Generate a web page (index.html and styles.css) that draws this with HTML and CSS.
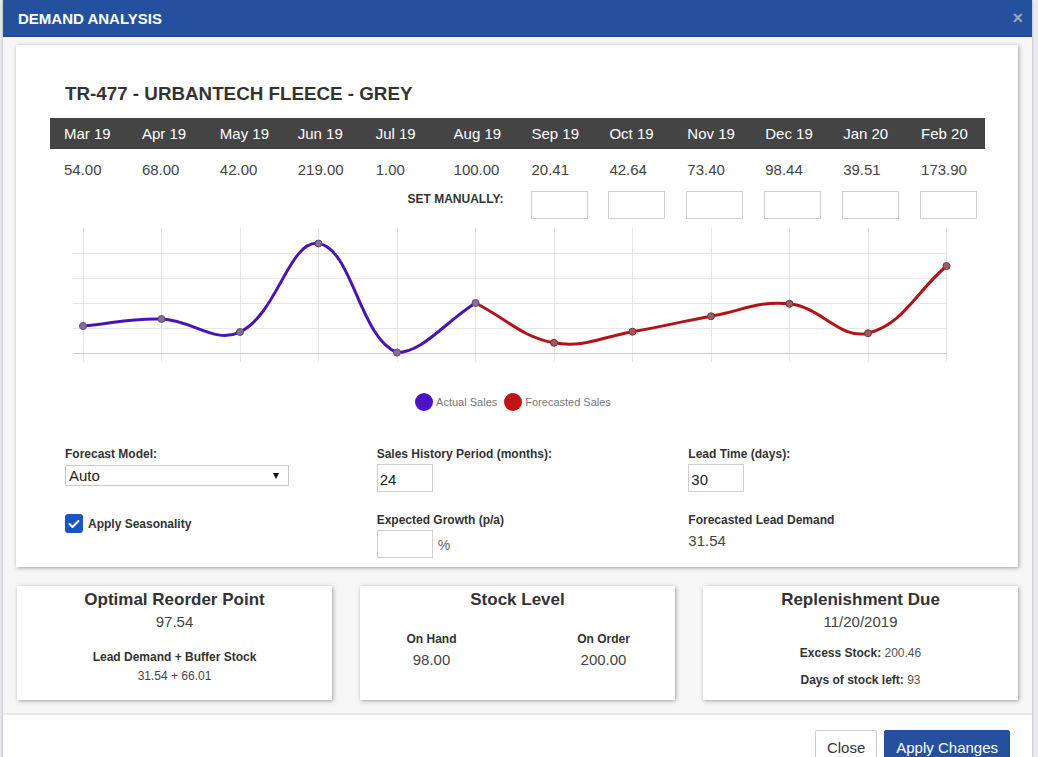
FILE: index.html
```html
<!DOCTYPE html>
<html lang="en">
<head>
<meta charset="utf-8">
<title>Demand Analysis</title>
<link rel="stylesheet" href="styles.css">
</head>
<body>
<div class="modal">
  <div class="modal-header">
    <h1 class="modal-title">DEMAND ANALYSIS</h1>
    <span class="close">×</span>
  </div>
  <div class="modal-body">
    <div class="panel main-panel">
      <h2 class="product">TR-477 - URBANTECH FLEECE - GREY</h2>
      <div class="months months-head">
        <div>Mar 19</div><div>Apr 19</div><div>May 19</div><div>Jun 19</div><div>Jul 19</div><div>Aug 19</div>
        <div>Sep 19</div><div>Oct 19</div><div>Nov 19</div><div>Dec 19</div><div>Jan 20</div><div>Feb 20</div>
      </div>
      <div class="months months-vals">
        <div>54.00</div><div>68.00</div><div>42.00</div><div>219.00</div><div>1.00</div><div>100.00</div>
        <div>20.41</div><div>42.64</div><div>73.40</div><div>98.44</div><div>39.51</div><div>173.90</div>
      </div>
      <div class="months months-manual">
        <div class="set-label">SET MANUALLY:</div>
        <div><input class="box" type="text"></div>
        <div><input class="box" type="text"></div>
        <div><input class="box" type="text"></div>
        <div><input class="box" type="text"></div>
        <div><input class="box" type="text"></div>
        <div><input class="box" type="text"></div>
      </div>
      <svg class="chart" width="935" height="150" viewBox="50 222 935 150" xmlns="http://www.w3.org/2000/svg">
        <g stroke="#e6e6e6" stroke-width="1" fill="none">
          <line x1="83.5" y1="228" x2="83.5" y2="362"/>
          <line x1="161.5" y1="228" x2="161.5" y2="362"/>
          <line x1="240.5" y1="228" x2="240.5" y2="362"/>
          <line x1="318.5" y1="228" x2="318.5" y2="362"/>
          <line x1="397.5" y1="228" x2="397.5" y2="362"/>
          <line x1="475.5" y1="228" x2="475.5" y2="362"/>
          <line x1="554.5" y1="228" x2="554.5" y2="362"/>
          <line x1="632.5" y1="228" x2="632.5" y2="362"/>
          <line x1="711.5" y1="228" x2="711.5" y2="362"/>
          <line x1="789.5" y1="228" x2="789.5" y2="362"/>
          <line x1="868.5" y1="228" x2="868.5" y2="362"/>
          <line x1="946.5" y1="228" x2="946.5" y2="362"/>
          <line x1="73" y1="253.5" x2="947" y2="253.5"/>
          <line x1="73" y1="278.5" x2="947" y2="278.5"/>
          <line x1="73" y1="303.5" x2="947" y2="303.5"/>
          <line x1="73" y1="328.5" x2="947" y2="328.5"/>
        </g>
        <line x1="73" y1="353.5" x2="947" y2="353.5" stroke="#c8c8c8" stroke-width="1"/>
        <path d="M475.5,303 C506.9,318.9 521,336.8 554,342.8 C583.8,348.2 601.2,337 632.5,331.7 C664,326.4 679.5,321.9 711,316.3 C742.3,310.7 758.9,300.5 789.5,303.8 C821.7,307.3 839.9,340 868,333.2 C902.7,324.9 915.1,292.9 946.5,266" fill="none" stroke="#b01418" stroke-width="3"/>
        <path d="M83,326 C114.4,323.2 130.3,317.8 161.5,319 C193.1,320.2 214.7,344.2 240,332 C277.5,314 289.1,239.7 318.5,243.5 C351.9,247.9 359.9,338.4 397,352.5 C422.7,352.5 444.1,322.8 475.5,303" fill="none" stroke="#4a14b4" stroke-width="3"/>
        <g fill="#84708f" stroke="#5f4a7a" stroke-width="1">
          <circle cx="83" cy="326" r="3.5"/>
          <circle cx="161.5" cy="319" r="3.5"/>
          <circle cx="240" cy="332" r="3.5"/>
          <circle cx="318.5" cy="243.5" r="3.5"/>
          <circle cx="397" cy="352.5" r="3.5"/>
          <circle cx="475.5" cy="303" r="3.5"/>
        </g>
        <g fill="#9a5e62" stroke="#7a3036" stroke-width="1">
          <circle cx="554" cy="342.8" r="3.5"/>
          <circle cx="632.5" cy="331.7" r="3.5"/>
          <circle cx="711" cy="316.3" r="3.5"/>
          <circle cx="789.5" cy="303.8" r="3.5"/>
          <circle cx="868" cy="333.2" r="3.5"/>
          <circle cx="946.5" cy="266" r="3.5"/>
        </g>
      </svg>
      <div class="legend">
        <span class="dot dot-actual"></span><span class="legend-text">Actual Sales</span>
        <span class="dot dot-forecast"></span><span class="legend-text">Forecasted Sales</span>
      </div>
      <div class="form-grid">
        <div class="field">
          <label class="label">Forecast Model:</label>
          <div class="select"><span>Auto</span><svg class="caret" width="6" height="6" viewBox="0 0 6 6"><polygon points="0,0 6,0 3,6" fill="#111"/></svg></div>
        </div>
        <div class="field">
          <label class="label">Sales History Period (months):</label>
          <input class="num" type="text" value="24">
        </div>
        <div class="field">
          <label class="label">Lead Time (days):</label>
          <input class="num" type="text" value="30">
        </div>
        <div class="field check-field">
          <span class="checkbox"><svg width="12" height="10" viewBox="0 0 12 10"><polyline points="1.5,5 4.5,8 10.5,2" fill="none" stroke="#fff" stroke-width="2" stroke-linecap="round" stroke-linejoin="round"/></svg></span>
          <span class="label">Apply Seasonality</span>
        </div>
        <div class="field">
          <label class="label">Expected Growth (p/a)</label>
          <div class="growth"><input class="num" type="text"><span class="pct">%</span></div>
        </div>
        <div class="field">
          <label class="label">Forecasted Lead Demand</label>
          <div class="value">31.54</div>
        </div>
      </div>
    </div>
    <div class="cards">
      <div class="panel card">
        <h3 class="card-title">Optimal Reorder Point</h3>
        <div class="big">97.54</div>
        <div class="small-label lead-label">Lead Demand + Buffer Stock</div>
        <div class="small-val">31.54 + 66.01</div>
      </div>
      <div class="panel card">
        <h3 class="card-title">Stock Level</h3>
        <div class="stock-cols">
          <div class="stock-col"><div class="small-label">On Hand</div><div class="big">98.00</div></div>
          <div class="stock-col"><div class="small-label">On Order</div><div class="big">200.00</div></div>
        </div>
      </div>
      <div class="panel card">
        <h3 class="card-title">Replenishment Due</h3>
        <div class="big">11/20/2019</div>
        <div class="stat stat-excess"><b>Excess Stock:</b> 200.46</div>
        <div class="stat stat-days"><b>Days of stock left:</b> 93</div>
      </div>
    </div>
  </div>
  <div class="modal-footer">
    <button class="btn btn-default">Close</button>
    <button class="btn btn-primary">Apply Changes</button>
  </div>
</div>
</body>
</html>
```
FILE: styles.css
```css
html, body {
  margin: 0;
  padding: 0;
}
body {
  background: #e9ebee;
  font-family: "Liberation Sans", Arial, sans-serif;
  color: #333;
  width: 1038px;
  height: 757px;
  overflow: hidden;
}
.modal {
  margin-left: 3px;
  width: 1029px;
  background: #fff;
  box-shadow: 0 0 3px rgba(0,0,0,0.25);
}
.modal-header {
  height: 37px;
  background: #24509e;
  border-bottom: 1px solid #1c4489;
  box-sizing: border-box;
  display: flex;
  align-items: center;
  justify-content: space-between;
  padding: 0 9px 0 15px;
}
.modal-title {
  margin: 0;
  font-size: 15px;
  font-weight: bold;
  color: #fff;
  line-height: 37px;
}
.close {
  color: #9aa4b8;
  font-size: 18px;
  font-weight: bold;
  line-height: 18px;
}
.modal-body {
  background: #f6f6f6;
  padding: 8px 14px 13px 13px;
}
.panel {
  background: #fff;
  box-shadow: 1px 1px 4px rgba(0,0,0,0.35);
}
.main-panel {
  padding: 38px 33px 9px 34px;
}
.product {
  margin: 0 0 13px 15px;
  font-size: 18.8px;
  line-height: 22px;
  font-weight: bold;
  color: #333;
}
.months {
  display: grid;
  grid-template-columns: repeat(12, minmax(0, 1fr));
}
.months-head {
  background: #444;
  color: #fff;
  height: 31px;
  line-height: 31px;
  font-size: 15px;
}
.months-head div, .months-vals div {
  padding-left: 14px;
}
.months-vals {
  padding-top: 11px;
  line-height: 20px;
  font-size: 15px;
  color: #444;
}
.months-manual {
  margin-top: 11px;
}
.set-label {
  grid-column: 1 / span 6;
  text-align: right;
  padding: 1px 14px 0 0;
  font-size: 12px;
  line-height: 14px;
  font-weight: bold;
  color: #333;
}
.box {
  display: block;
  margin-left: 13px;
  width: 57px;
  height: 28px;
  box-sizing: border-box;
  border: 1px solid #cfcfcf;
  padding: 0;
  background: #fff;
}
.chart {
  display: block;
  margin-top: 3px;
}
.legend {
  margin-top: 20px;
  height: 20px;
  display: flex;
  align-items: center;
  justify-content: center;
  padding-right: 9px;
}
.dot {
  width: 18px;
  height: 18px;
  border-radius: 50%;
  margin-right: 3px;
}
.dot-actual {
  background: #4d12c6;
}
.dot-forecast {
  background: #c01515;
  margin-left: 7px;
}
.legend-text {
  font-size: 11px;
  color: #777;
}
.form-grid {
  margin-top: 35px;
  display: grid;
  grid-template-columns: repeat(3, minmax(0, 1fr));
  row-gap: 21px;
}
.field {
  padding-left: 15px;
  display: flex;
  flex-direction: column;
  align-items: flex-start;
}
.label {
  font-size: 12px;
  line-height: 14px;
  font-weight: bold;
  color: #333;
}
.select {
  margin-top: 4px;
  width: 224px;
  height: 21px;
  box-sizing: border-box;
  border: 1px solid #c8c8c8;
  display: flex;
  align-items: center;
  justify-content: space-between;
  padding: 0 9px 0 3px;
  font-size: 15px;
  color: #222;
}
.caret {
  display: block;
}
.num {
  margin-top: 3px;
  width: 56px;
  height: 28px;
  box-sizing: border-box;
  border: 1px solid #cfcfcf;
  padding: 2px 0 0 2px;
  font-family: "Liberation Sans", Arial, sans-serif;
  font-size: 15px;
  color: #222;
  background: #fff;
}
.check-field {
  flex-direction: row;
  align-items: center;
  padding-top: 1px;
  align-self: start;
}
.checkbox {
  width: 18px;
  height: 19px;
  border-radius: 3px;
  background: #1b55c3;
  display: flex;
  align-items: center;
  justify-content: center;
  margin-right: 5px;
}
.growth {
  display: flex;
  align-items: center;
}
.pct {
  margin: 4px 0 0 5px;
  font-size: 14px;
  color: #666;
}
.value {
  margin-top: 4px;
  font-size: 15px;
  line-height: 20px;
  color: #444;
}
.cards {
  margin: 19px 0 0 1px;
  display: grid;
  grid-template-columns: repeat(3, minmax(0, 1fr));
  column-gap: 28px;
}
.card {
  height: 114px;
  box-sizing: border-box;
  padding-top: 4px;
  text-align: center;
}
.card-title {
  margin: 0;
  font-size: 17px;
  line-height: 20px;
  font-weight: bold;
  color: #333;
}
.big {
  margin-top: 2px;
  font-size: 15px;
  line-height: 20px;
  color: #444;
}
.small-label {
  font-size: 12px;
  line-height: 16px;
  font-weight: bold;
  color: #333;
}
.lead-label {
  margin-top: 17px;
}
.small-val {
  margin-top: 3px;
  font-size: 12px;
  line-height: 16px;
  color: #444;
}
.stock-cols {
  margin-top: 21px;
  display: flex;
  justify-content: center;
  gap: 32px;
}
.stock-col {
  width: 140px;
}
.stock-col .big {
  margin-top: 3px;
}
.stat {
  font-size: 12px;
  line-height: 16px;
  color: #555;
}
.stat b {
  color: #333;
}
.stat-excess {
  margin-top: 13px;
}
.stat-days {
  margin-top: 11px;
}
.modal-footer {
  border-top: 2px solid #e8e8e8;
  padding: 15px 22px 20px 0;
  display: flex;
  justify-content: flex-end;
  gap: 7px;
}
.btn {
  font-family: "Liberation Sans", Arial, sans-serif;
  font-size: 15px;
  height: 34px;
  padding: 0 11px;
  border-radius: 2px;
  border: 1px solid #ccc;
  background: #fff;
  color: #333;
}
.btn-primary {
  background: #24509e;
  border-color: #24509e;
  color: #fff;
}
```
